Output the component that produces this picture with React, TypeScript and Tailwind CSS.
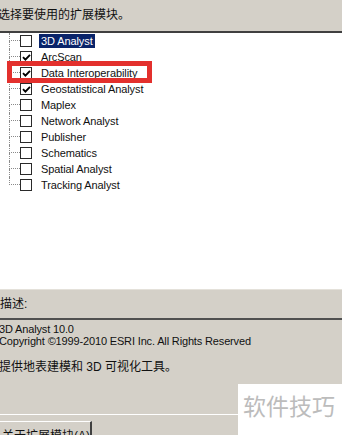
import React from "react";

const items = [
  { name: "3D Analyst", checked: false, selected: true },
  { name: "ArcScan", checked: true },
  { name: "Data Interoperability", checked: true },
  { name: "Geostatistical Analyst", checked: true },
  { name: "Maplex", checked: false },
  { name: "Network Analyst", checked: false },
  { name: "Publisher", checked: false },
  { name: "Schematics", checked: false },
  { name: "Spatial Analyst", checked: false },
  { name: "Tracking Analyst", checked: false },
];

const Check = () => (
  <svg width="9" height="9" viewBox="0 0 9 9" className="block">
    <path d="M1 4.2 L3.4 6.6 L8 1.8" stroke="#000" strokeWidth="1.9" fill="none" />
  </svg>
);

const App = () => {
  return (
    <div
      className="relative w-[342px] h-[435px] overflow-hidden bg-[#d4d0c8] text-black"
      style={{ fontFamily: '"Liberation Sans", "Noto Sans CJK SC", sans-serif' }}
    >
      {/* Title */}
      <div className="h-[31px] flex items-center -ml-[2px] pb-[1px] text-[12px] text-[#111]">
        选择要使用的扩展模块。
      </div>

      {/* Extension list */}
      <div className="h-[259px] bg-white border-t-2 border-t-[#404040] border-b border-b-[#e4e1da]">
        <div className="pl-[9px]">
          {items.map((it, i) => (
            <div key={it.name} className="h-4 flex items-center">
              <div className="w-[11px] h-4 flex flex-col">
                <div className="h-2 border-l border-b border-dotted border-[#8a8a8a]" />
                <div
                  className={
                    i === items.length - 1
                      ? "h-2"
                      : "h-2 border-l border-dotted border-[#8a8a8a]"
                  }
                />
              </div>
              <div className="w-[12px] h-[12px] border border-[#2a2a2a] bg-white flex items-center justify-center">
                {it.checked && <Check />}
              </div>
              <span
                className={
                  "ml-[7px] px-[2px] h-[14px] leading-[14px] text-[11px] tracking-[-0.1px] " +
                  (it.selected ? "bg-[#0a246a] text-white" : "text-[#111]")
                }
              >
                {it.name}
              </span>
            </div>
          ))}
        </div>
      </div>

      {/* Description label */}
      <div className="h-[28px] flex items-center text-[12px] text-[#111]">描述:</div>

      {/* Description box */}
      <div className="h-[97px] border-t-2 border-t-[#505050] border-b border-b-white pt-[3px] -ml-[1px] text-[11px] leading-[12px] tracking-[-0.15px] text-[#111]">
        <div>3D Analyst 10.0</div>
        <div>Copyright ©1999-2010 ESRI Inc. All Rights Reserved</div>
        <div className="mt-[14px] text-[12px] tracking-normal">提供地表建模和 3D 可视化工具。</div>
      </div>

      {/* About button */}
      <div className="mt-[6px] w-[92px] h-[20px] border-t border-t-white border-r-2 border-r-[#404040] bg-[#d4d0c8] pl-[2px] pt-[7px] text-[12px] leading-[14px] text-[#111]">
        关于扩展模块(<span className="underline">A</span>)
      </div>

      {/* Watermark */}
      <div className="absolute left-[238px] top-[384px] w-[104px] h-[51px] bg-white flex items-start pl-[5px] pt-[9px]">
        <span
          className="text-[23px] leading-[24px] text-[#bcbcbc]"
          style={{ fontFamily: '"Noto Sans CJK SC", sans-serif' }}
        >
          软件技巧
        </span>
      </div>

      {/* Red highlight */}
      <div className="absolute left-[7px] top-[61px] w-[145px] h-[22px] border-[5px] border-[#e3302d]" />
    </div>
  );
};

export default App;
